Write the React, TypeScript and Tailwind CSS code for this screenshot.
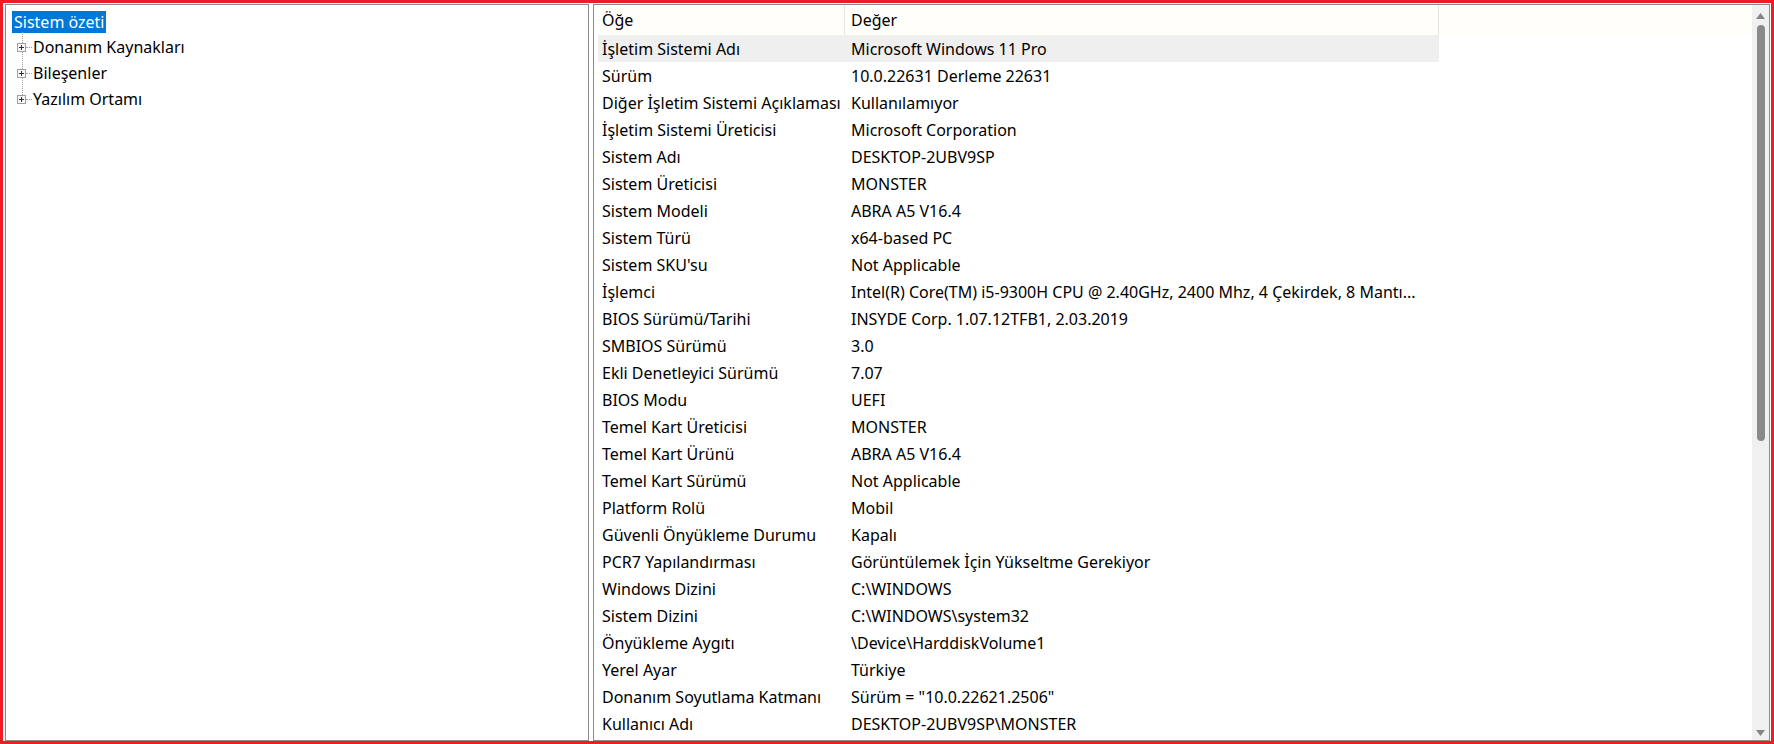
const rows: [string, string][] = [
  ["İşletim Sistemi Adı", "Microsoft Windows 11 Pro"],
  ["Sürüm", "10.0.22631 Derleme 22631"],
  ["Diğer İşletim Sistemi Açıklaması", "Kullanılamıyor"],
  ["İşletim Sistemi Üreticisi", "Microsoft Corporation"],
  ["Sistem Adı", "DESKTOP-2UBV9SP"],
  ["Sistem Üreticisi", "MONSTER"],
  ["Sistem Modeli", "ABRA A5 V16.4"],
  ["Sistem Türü", "x64-based PC"],
  ["Sistem SKU'su", "Not Applicable"],
  ["İşlemci", "Intel(R) Core(TM) i5-9300H CPU @ 2.40GHz, 2400 Mhz, 4 Çekirdek, 8 Mantı..."],
  ["BIOS Sürümü/Tarihi", "INSYDE Corp. 1.07.12TFB1, 2.03.2019"],
  ["SMBIOS Sürümü", "3.0"],
  ["Ekli Denetleyici Sürümü", "7.07"],
  ["BIOS Modu", "UEFI"],
  ["Temel Kart Üreticisi", "MONSTER"],
  ["Temel Kart Ürünü", "ABRA A5 V16.4"],
  ["Temel Kart Sürümü", "Not Applicable"],
  ["Platform Rolü", "Mobil"],
  ["Güvenli Önyükleme Durumu", "Kapalı"],
  ["PCR7 Yapılandırması", "Görüntülemek İçin Yükseltme Gerekiyor"],
  ["Windows Dizini", "C:\\WINDOWS"],
  ["Sistem Dizini", "C:\\WINDOWS\\system32"],
  ["Önyükleme Aygıtı", "\\Device\\HarddiskVolume1"],
  ["Yerel Ayar", "Türkiye"],
  ["Donanım Soyutlama Katmanı", 'Sürüm = "10.0.22621.2506"'],
  ["Kullanıcı Adı", "DESKTOP-2UBV9SP\\MONSTER"],
];

const treeItems = ["Donanım Kaynakları", "Bileşenler", "Yazılım Ortamı"];

function Expander() {
  return (
    <svg width="9" height="9" viewBox="0 0 9 9" className="shrink-0">
      <rect x="0.5" y="0.5" width="8" height="8" fill="#f7f7f7" stroke="#a0a0a0" />
      <path d="M2 4.5h5M4.5 2v5" stroke="#333" strokeWidth="1" />
    </svg>
  );
}

export default function App() {
  return (
    <div
      className="flex h-[744px] w-[1774px] gap-[4px] border-[3px] border-[#ee1c24] bg-white pl-[2px] pt-[1px] pr-[1px] text-[16px] text-black"
      style={{ fontFamily: '"Noto Sans", "Open Sans", sans-serif' }}
    >
      {/* left tree pane */}
      <div className="h-[737px] w-[584px] shrink-0 border border-[#8a8a8a] bg-white pl-[6px] pt-[5px]">
        <div className="relative">
          <div className="inline-flex h-[22px] items-center bg-[#0078d7] px-[2px] text-white">Sistem özeti</div>
          <div className="absolute left-[10px] top-[22px] h-[71px] border-l border-dotted border-[#a0a0a0]" />
          {treeItems.map((t) => (
            <div key={t} className="relative flex h-[26px] items-center pl-[5px]">
              <Expander />
              <span className="w-[6px] border-t border-dotted border-[#a0a0a0]" />
              <span className="pl-[1px]">{t}</span>
            </div>
          ))}
        </div>
      </div>

      {/* right list pane */}
      <div className="flex h-[737px] flex-1 border border-[#8a8a8a] bg-white">
        <div className="flex-1 pl-[4px]">
          <div className="flex h-[30px] items-center bg-[#fffefb]">
            <div className="flex h-full w-[247px] items-center border-r border-[#e5e5e5] pl-[4px]">Öğe</div>
            <div className="flex h-full w-[594px] items-center border-r border-[#e5e5e5] pl-[6px]">Değer</div>
          </div>
          {rows.map(([k, v], i) => (
            <div key={k} className={`flex h-[27px] w-[841px] items-center ${i === 0 ? "bg-[#efefef]" : ""}`}>
              <div className="w-[247px] shrink-0 whitespace-nowrap pl-[4px]">{k}</div>
              <div className="w-[594px] whitespace-nowrap pl-[6px]">{v}</div>
            </div>
          ))}
        </div>
        {/* scrollbar */}
        <div className="flex w-[17px] flex-col items-center bg-[#f0f0f0] pb-[4px] pt-[8px]">
          <svg width="9" height="6" viewBox="0 0 9 6">
            <path d="M4.5 0L9 6H0z" fill="#858585" />
          </svg>
          <div className="mt-[6px] h-[416px] w-[8px] rounded-full bg-[#8a8a8a]" />
          <div className="flex-1" />
          <svg width="9" height="6" viewBox="0 0 9 6">
            <path d="M0 0h9L4.5 6z" fill="#858585" />
          </svg>
        </div>
      </div>
    </div>
  );
}
